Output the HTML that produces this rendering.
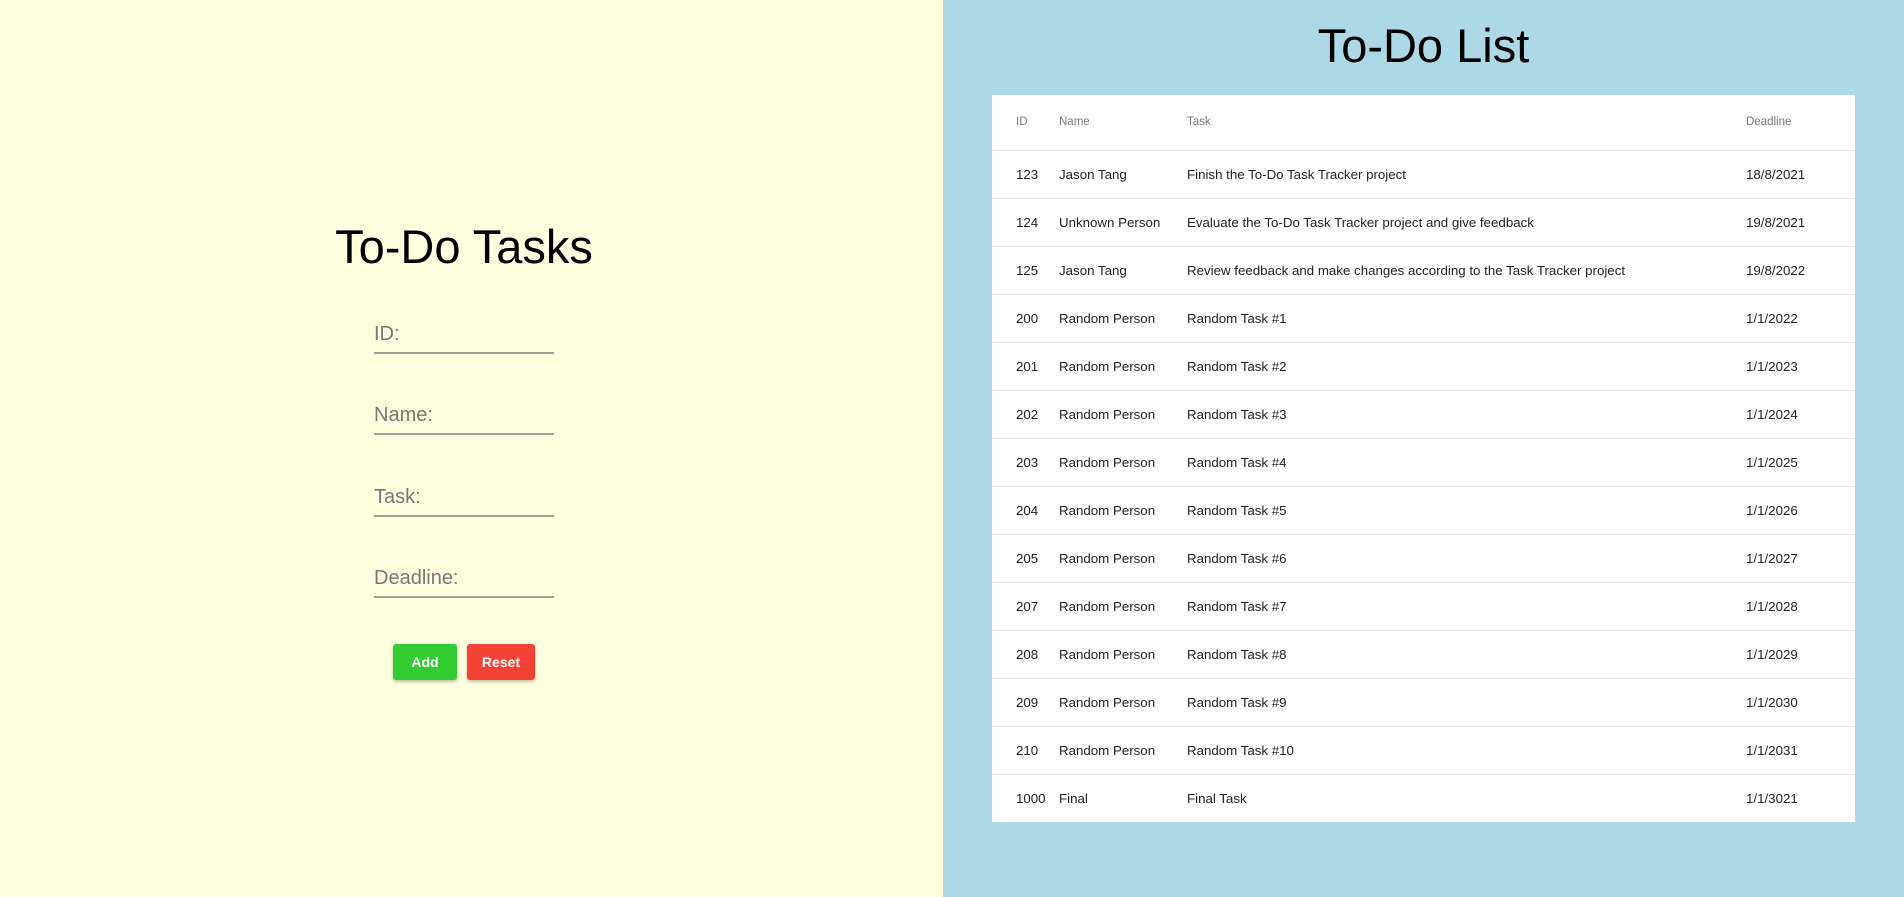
<!DOCTYPE html>
<html><head><style>
*{margin:0;padding:0;box-sizing:border-box}
body{width:1904px;height:897px;font-family:"Liberation Sans",sans-serif;position:relative;overflow:hidden}
.left{position:absolute;left:0;top:0;width:943px;height:897px;background:#ffffe0}
.right{position:absolute;left:943px;top:0;width:961px;height:897px;background:#add8e6}
h1{position:absolute;font-weight:normal;font-size:47px;color:#000;white-space:nowrap}
.f{position:absolute;left:374px;width:180px;border-bottom:2px solid #a0a09a;font-size:20px;color:#777;padding-bottom:6px}
.btn{position:absolute;top:644px;height:36px;color:#fff;font-weight:bold;font-size:14px;text-align:center;line-height:36px;border-radius:3px;box-shadow:0 2px 3px rgba(0,0,0,.25)}
table{position:absolute;left:992px;top:95px;width:863px;background:#fff;border-collapse:collapse;font-size:13.3px;color:#222}
td,th{text-align:left;font-weight:normal;border-bottom:1px solid #e0e0e0;height:48px;padding:0}
th{height:55px;font-size:11.5px;color:#777}
tr:last-child td{border-bottom:none}
</style></head><body>
<div class="left">
<h1 style="left:0;width:928px;text-align:center;top:219px">To-Do Tasks</h1>
<div class="f" style="top:323px">ID:</div>
<div class="f" style="top:404px">Name:</div>
<div class="f" style="top:486px">Task:</div>
<div class="f" style="top:567px">Deadline:</div>
<div class="btn" style="left:393px;width:64px;background:#33cc33">Add</div>
<div class="btn" style="left:467px;width:68px;background:#f44336">Reset</div>
</div>
<div class="right">
<h1 style="left:0;width:961px;text-align:center;top:18px">To-Do List</h1>
</div>
<table>
<colgroup><col style="width:24px"><col style="width:43px"><col style="width:128px"><col style="width:559px"><col></colgroup>
<tr><th></th><th>ID</th><th>Name</th><th>Task</th><th>Deadline</th></tr>
<tr><td></td><td>123</td><td>Jason Tang</td><td>Finish the To-Do Task Tracker project</td><td>18/8/2021</td></tr>
<tr><td></td><td>124</td><td>Unknown Person</td><td>Evaluate the To-Do Task Tracker project and give feedback</td><td>19/8/2021</td></tr>
<tr><td></td><td>125</td><td>Jason Tang</td><td>Review feedback and make changes according to the Task Tracker project</td><td>19/8/2022</td></tr>
<tr><td></td><td>200</td><td>Random Person</td><td>Random Task #1</td><td>1/1/2022</td></tr>
<tr><td></td><td>201</td><td>Random Person</td><td>Random Task #2</td><td>1/1/2023</td></tr>
<tr><td></td><td>202</td><td>Random Person</td><td>Random Task #3</td><td>1/1/2024</td></tr>
<tr><td></td><td>203</td><td>Random Person</td><td>Random Task #4</td><td>1/1/2025</td></tr>
<tr><td></td><td>204</td><td>Random Person</td><td>Random Task #5</td><td>1/1/2026</td></tr>
<tr><td></td><td>205</td><td>Random Person</td><td>Random Task #6</td><td>1/1/2027</td></tr>
<tr><td></td><td>207</td><td>Random Person</td><td>Random Task #7</td><td>1/1/2028</td></tr>
<tr><td></td><td>208</td><td>Random Person</td><td>Random Task #8</td><td>1/1/2029</td></tr>
<tr><td></td><td>209</td><td>Random Person</td><td>Random Task #9</td><td>1/1/2030</td></tr>
<tr><td></td><td>210</td><td>Random Person</td><td>Random Task #10</td><td>1/1/2031</td></tr>
<tr><td></td><td>1000</td><td>Final</td><td>Final Task</td><td>1/1/3021</td></tr>
</table>
</body></html>
